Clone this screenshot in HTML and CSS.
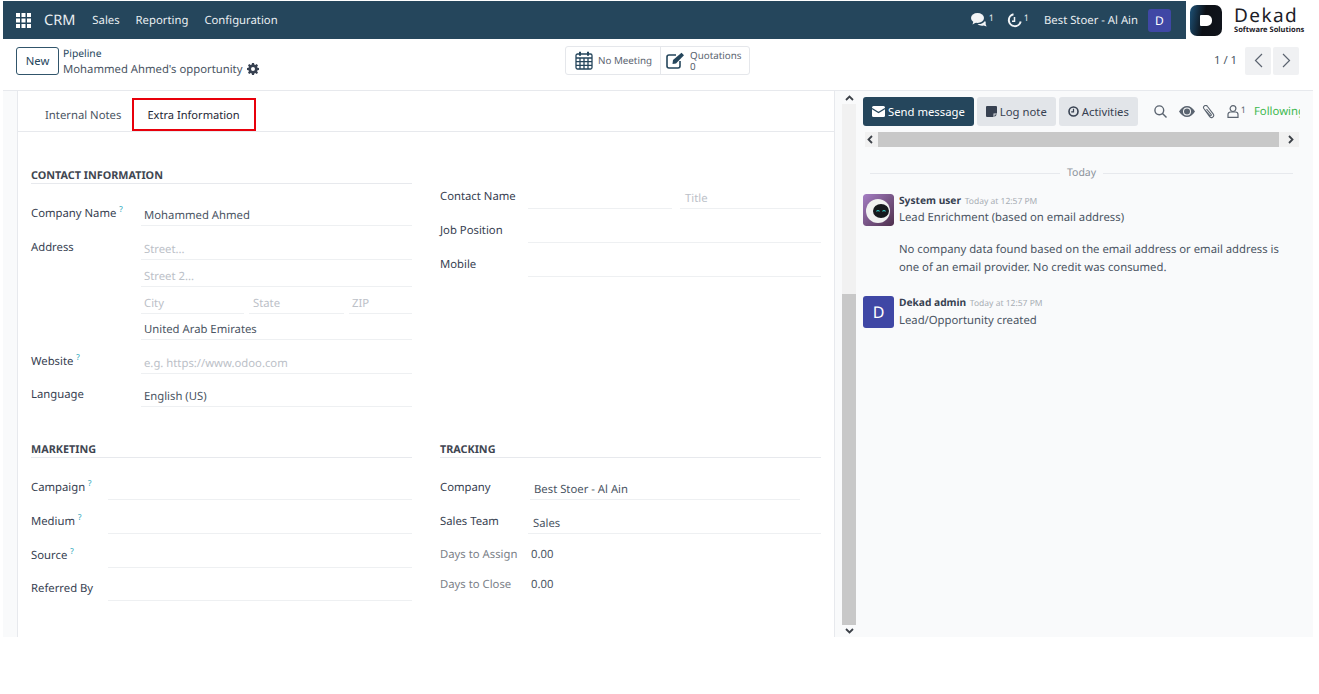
FILE: index.html
```html
<!DOCTYPE html>
<html lang="en">
<head>
	<meta charset="utf-8">
	<title>Mohammed Ahmed's opportunity</title>
	<link rel="stylesheet" href="styles.css">
</head>
<body>
<div class="app">
	<header class="topbar">
		<nav class="navbar">
			<svg class="apps-icon" width="15" height="15" viewBox="0 0 15 15" fill="#fff">
				<rect x="0" y="0" width="4" height="4"/><rect x="5.500" y="0" width="4" height="4"/><rect x="11" y="0" width="4" height="4"/>
				<rect x="0" y="5.500" width="4" height="4"/><rect x="5.500" y="5.500" width="4" height="4"/><rect x="11" y="5.500" width="4" height="4"/>
				<rect x="0" y="11" width="4" height="4"/><rect x="5.500" y="11" width="4" height="4"/><rect x="11" y="11" width="4" height="4"/>
			</svg>
			<span class="brand">CRM</span>
			<a class="nav-link">Sales</a>
			<a class="nav-link">Reporting</a>
			<a class="nav-link">Configuration</a>
			<span class="nav-space"></span>
			<span class="systray">
				<svg width="16" height="14" viewBox="0 0 16 14" fill="#f3f5f7">
					<ellipse cx="6.500" cy="5" rx="6.500" ry="5"/>
					<path d="M2.500 8 1.500 11.500l4-2.200z"/>
					<path d="M6.500 11c3 .4 6-.6 7.500-3 .8 1 1 2 .6 3l1 2.500-3-1c-2.200.6-4.500 0-6.100-1.500z"/>
				</svg>
				<sup>1</sup>
			</span>
			<span class="systray clock">
				<svg width="15" height="15" viewBox="0 0 15 15" fill="none" stroke="#f3f5f7" stroke-width="2">
					<path d="M6.500 1.300a6 6 0 1 0 7.200 7.200"/>
					<path d="M7.500 4v4.200H5" stroke-width="1.500"/>
				</svg>
				<sup>1</sup>
			</span>
			<span class="company-name">Best Stoer - Al Ain</span>
			<span class="user-badge">D</span>
		</nav>
		<div class="logo">
			<span class="logo-mark"><span class="logo-glyph"></span></span>
			<span class="logo-text">
				<span class="logo-name">Dekad</span>
				<span class="logo-sub">Software Solutions</span>
			</span>
		</div>
	</header>

	<div class="control-panel">
		<div class="cp-left">
			<button class="btn-new">New</button>
			<div class="crumbs">
				<a>Pipeline</a>
				<div class="crumb-title">Mohammed Ahmed's opportunity
					<svg width="12" height="12" viewBox="0 0 12 12" fill="#374151">
						<path fill-rule="evenodd" d="M5 0h2l.3 1.600 1 .4L9.700 1.100l1.300 1.300-.9 1.400.4 1L12 5v2l-1.500.3-.4 1 .9 1.400-1.300 1.300-1.400-.9-1 .4L7 12H5l-.3-1.500-1-.4-1.400.9-1.300-1.300.9-1.400-.4-1L0 7V5l1.500-.3.4-1-.9-1.400 1.300-1.300 1.400.9 1-.4zM6 4a2 2 0 1 0 0 4 2 2 0 0 0 0-4z"/>
					</svg>
				</div>
			</div>
		</div>
		<div class="stat-buttons">
			<div class="stat meeting">
				<svg width="18" height="19" viewBox="0 0 18 19" fill="none" stroke="#25465c" stroke-width="1.300">
					<rect x="1" y="3" width="16" height="15" rx="1.500"/>
					<path d="M1 7h16M1 10.700h16M1 14.400h16M5 7v11M9 7v11M13 7v11"/>
					<path d="M5 .8v4M13 .8v4" stroke-width="2"/>
				</svg>
				<span>No Meeting</span>
			</div>
			<div class="stat quotations">
				<svg width="19" height="17" viewBox="0 0 19 17" fill="none" stroke="#25465c" stroke-width="1.600">
					<path d="M10 3H3a2 2 0 0 0-2 2v9a2 2 0 0 0 2 2h9a2 2 0 0 0 2-2V9"/>
					<path d="M7 8 15.500 .8 18 3.300 10 11.500l-3.500.5z" fill="#25465c" stroke="none"/>
				</svg>
				<span class="stat-text"><span>Quotations</span><span>0</span></span>
			</div>
		</div>
		<div class="cp-right">
			<span class="pager-count">1 / 1</span>
			<span class="pager-btns">
				<button class="pager-btn"><svg width="9" height="15" viewBox="0 0 9 15" fill="none" stroke="#5b6470" stroke-width="1.200"><path d="M8 1 1.500 7.500 8 14"/></svg></button>
				<button class="pager-btn"><svg width="9" height="15" viewBox="0 0 9 15" fill="none" stroke="#5b6470" stroke-width="1.200"><path d="M1 1l6.500 6.500L1 14"/></svg></button>
			</span>
		</div>
	</div>

	<main class="content">
		<section class="sheet">
			<ul class="tabs">
				<li class="tab">Internal Notes</li>
				<li class="tab tab-marked">Extra Information</li>
			</ul>
			<div class="form-grid">
				<div class="group">
					<h3 class="group-title">CONTACT INFORMATION</h3>
					<div class="rows labels-112">
						<div class="row"><label>Company Name <sup class="help">?</sup></label><div class="field">Mohammed Ahmed</div></div>
						<div class="row"><label>Address</label><div class="field empty">Street...</div></div>
						<div class="row row-27"><label></label><div class="field empty">Street 2...</div></div>
						<div class="row row-27"><label></label>
							<div class="field-line">
								<div class="field empty city">City</div>
								<div class="field empty state">State</div>
								<div class="field empty zip">ZIP</div>
							</div>
						</div>
						<div class="row row-26"><label></label><div class="field">United Arab Emirates</div></div>
						<div class="row"><label>Website <sup class="help">?</sup></label><div class="field empty">e.g. https://www.odoo.com</div></div>
						<div class="row row-33"><label>Language</label><div class="field">English (US)</div></div>
					</div>
				</div>
				<div class="group group-contact">
					<div class="rows labels-88">
						<div class="row"><label>Contact Name</label>
							<div class="field-line">
								<div class="field contact-name"></div>
								<div class="field empty contact-title">Title</div>
							</div>
						</div>
						<div class="row"><label>Job Position</label><div class="field"></div></div>
						<div class="row"><label>Mobile</label><div class="field"></div></div>
					</div>
				</div>
				<div class="group">
					<h3 class="group-title">MARKETING</h3>
					<div class="rows labels-77">
						<div class="row"><label>Campaign <sup class="help">?</sup></label><div class="field"></div></div>
						<div class="row"><label>Medium <sup class="help">?</sup></label><div class="field"></div></div>
						<div class="row"><label>Source <sup class="help">?</sup></label><div class="field"></div></div>
						<div class="row row-33"><label>Referred By</label><div class="field"></div></div>
					</div>
				</div>
				<div class="group">
					<h3 class="group-title">TRACKING</h3>
					<div class="rows labels-88">
						<div class="row"><label>Company</label><div class="field short">Best Stoer - Al Ain</div></div>
						<div class="row"><label>Sales Team</label><div class="field">Sales</div></div>
						<div class="row row-plain"><label class="muted">Days to Assign</label><div class="value">0.00</div></div>
						<div class="row row-plain row-30"><label class="muted">Days to Close</label><div class="value">0.00</div></div>
					</div>
				</div>
			</div>
		</section>

		<div class="form-scroll">
			<svg class="scroll-arrow" width="9" height="6" viewBox="0 0 9 6" fill="none" stroke="#3c4148" stroke-width="1.800"><path d="M1 5l3.500-3.500L8 5"/></svg>
			<div class="scroll-track"><div class="scroll-thumb"></div></div>
			<svg class="scroll-arrow" width="9" height="6" viewBox="0 0 9 6" fill="none" stroke="#3c4148" stroke-width="1.800"><path d="M1 1l3.500 3.500L8 1"/></svg>
		</div>

		<aside class="chatter">
			<div class="chatter-top">
				<button class="chat-btn primary">
					<svg width="13" height="11" viewBox="0 0 13 11" fill="#fff"><rect width="13" height="11" rx="1.500"/><path d="M0 2.500l6.500 4 6.500-4" fill="none" stroke="#25465c" stroke-width="1.200"/></svg>
					Send message
				</button>
				<button class="chat-btn">
					<svg width="11" height="11" viewBox="0 0 11 11" fill="#374151"><path d="M0 1a1 1 0 0 1 1-1h9a1 1 0 0 1 1 1v6.500H7.500V11H1a1 1 0 0 1-1-1z"/><path d="M8.500 8.500H11L8.500 11z"/></svg>
					Log note
				</button>
				<button class="chat-btn">
					<svg width="11" height="11" viewBox="0 0 11 11" fill="none" stroke="#374151"><circle cx="5.500" cy="5.500" r="4.500" stroke-width="1.600"/><path d="M5.500 2.800v3H3.200" stroke-width="1.200"/></svg>
					Activities
				</button>
				<span class="chat-tools">
					<svg class="tool-search" width="13" height="13" viewBox="0 0 13 13" fill="none" stroke="#5b6470" stroke-width="1.400"><circle cx="5.300" cy="5.300" r="4.400"/><path d="M8.500 8.500 12.500 12.500"/></svg>
					<svg class="tool-eye" width="16" height="11" viewBox="0 0 16 11" fill="#5b6470"><path fill-rule="evenodd" d="M0 5.500C2 2 5 0 8 0s6 2 8 5.500C14 9 11 11 8 11S2 9 0 5.500zM8 1.500a4 4 0 1 0 0 8 4 4 0 0 0 0-8z"/><circle cx="8" cy="5.500" r="3"/></svg>
					<svg class="tool-clip" width="13" height="14" viewBox="0 0 13 14" fill="none" stroke="#5b6470" stroke-width="1.100"><path d="M2.500 4.500 7.500 11.500a2.200 2.200 0 0 0 3.800-2.400L5.500 1.500A2 2 0 0 0 1.800 3.500L7.700 10.400a.8.800 0 0 0 1.400-1L4.500 4"/></svg>
					<span class="tool-followers">
						<svg width="12" height="13" viewBox="0 0 12 13" fill="none" stroke="#5b6470" stroke-width="1.200"><circle cx="6" cy="3.600" r="2.900"/><path d="M1 12.300V9.500a2.500 2.500 0 0 1 2.500-2.500h5A2.500 2.500 0 0 1 11 9.500v2.800z"/></svg>
						<sup>1</sup>
					</span>
					<span class="following">Following</span>
				</span>
			</div>
			<div class="h-scroll">
				<svg width="6" height="9" viewBox="0 0 6 9" fill="none" stroke="#3c4148" stroke-width="1.800"><path d="M5 1 1.500 4.500 5 8"/></svg>
				<div class="h-thumb"></div>
				<svg width="6" height="9" viewBox="0 0 6 9" fill="none" stroke="#3c4148" stroke-width="1.800"><path d="M1 1l3.500 3.500L1 8"/></svg>
			</div>
			<div class="day-sep"><span>Today</span></div>
			<article class="message">
				<svg class="avatar" width="31" height="32" viewBox="0 0 31 32">
					<defs>
						<linearGradient id="botbg" x1="0" y1="0" x2="1" y2="1"><stop offset="0" stop-color="#a57ec4"/><stop offset="1" stop-color="#4e2f4c"/></linearGradient>
					</defs>
					<rect width="31" height="32" rx="3" fill="url(#botbg)"/>
					<circle cx="15" cy="17" r="12" fill="#f1f1f1"/>
					<ellipse cx="18" cy="17" rx="8" ry="7" fill="#16181d"/>
					<path d="M13.500 17.500q1.500-2 3 0M19.500 17.500q1.500-2 3 0" fill="none" stroke="#35c6c0" stroke-width="1.200"/>
				</svg>
				<div class="msg-body">
					<div class="msg-head"><b>System user</b> <time>Today at 12:57 PM</time></div>
					<p class="msg-line">Lead Enrichment (based on email address)</p>
					<p class="msg-para">No company data found based on the email address or email address is one of an email provider. No credit was consumed.</p>
				</div>
			</article>
			<article class="message message-admin">
				<div class="avatar avatar-letter">D</div>
				<div class="msg-body">
					<div class="msg-head"><b>Dekad admin</b> <time>Today at 12:57 PM</time></div>
					<p class="msg-line msg-line-low">Lead/Opportunity created</p>
				</div>
			</article>
		</aside>
	</main>
</div>
</body>
</html>
```

FILE: styles.css
```css
* {
	box-sizing: border-box;
}
html, body {
	margin: 0;
	background: #fff;
}
body {
	font-family: "Noto Sans", "Open Sans", sans-serif;
	font-size: 11.300px;
	color: #4b5563;
	text-rendering: geometricPrecision;
}
.app {
	width: 1310px;
	height: 637px;
	margin-left: 3px;
	padding-top: 1px;
	display: flex;
	flex-direction: column;
	overflow: hidden;
}

/* top bar */
.topbar {
	display: flex;
	height: 38px;
	flex: none;
}
.navbar {
	flex: 1;
	display: flex;
	align-items: center;
	background: #25465c;
	color: #e9eef1;
	padding-left: 13px;
}
.apps-icon {
	margin-right: 13px;
}
.brand {
	font-size: 14.500px;
	margin-right: 17px;
}
.nav-link {
	margin-right: 16px;
}
.nav-space {
	flex: 1;
}
.systray {
	display: flex;
	align-items: center;
	margin-right: 13px;
}
.systray sup, .tool-followers sup {
	font-size: 9px;
	line-height: 1;
	align-self: flex-start;
	margin-left: 2px;
}
.systray.clock {
	margin-right: 15px;
}
.company-name {
	margin-right: 10px;
}
.user-badge {
	width: 23px;
	height: 23px;
	border-radius: 3px;
	background: #3f47a5;
	color: #fff;
	display: flex;
	align-items: center;
	justify-content: center;
	margin-right: 15px;
	font-size: 12px;
}
.logo {
	width: 127px;
	display: flex;
	align-items: center;
	padding-left: 4px;
	background: #fff;
}
.logo-mark {
	width: 32px;
	height: 31px;
	flex: none;
	border-radius: 7px;
	background: linear-gradient(100deg, #1d5278, #0d1016 45%, #10141c);
	display: flex;
	align-items: center;
	justify-content: center;
	margin-right: 12px;
}
.logo-glyph {
	width: 12px;
	height: 11px;
	background: #fff;
	border-radius: 1px 5px 5px 1px;
}
.logo-text {
	display: flex;
	flex-direction: column;
	color: #1c2027;
}
.logo-name {
	font-size: 19px;
	line-height: 20px;
	letter-spacing: 1.400px;
}
.logo-sub {
	font-size: 7.500px;
	font-weight: 700;
	line-height: 10px;
	white-space: nowrap;
}

/* control panel */
.control-panel {
	height: 52px;
	flex: none;
	display: grid;
	grid-template-columns: 1fr auto 1fr;
	align-items: center;
	background: #fff;
	border-bottom: 1px solid #e7e9ed;
	padding: 0 14px 8px 13px;
}
.cp-left {
	display: flex;
	align-items: center;
}
.btn-new {
	width: 43px;
	height: 28px;
	padding: 0;
	border: 1px solid #31556b;
	border-radius: 3px;
	background: #fff;
	color: #25465c;
	font: 11.300px "Noto Sans", sans-serif;
	margin-right: 4px;
}
.crumbs {
	padding-top: 2px;
	line-height: 15px;
	font-size: 10.300px;
	color: #25465c;
}
.crumb-title {
	font-size: 11.300px;
	color: #4b5563;
	display: flex;
	align-items: center;
	gap: 5px;
}
.stat-buttons {
	display: flex;
	height: 29px;
	border: 1px solid #e5e7eb;
	border-radius: 3px;
}
.stat {
	display: flex;
	align-items: center;
	font-size: 9.800px;
	color: #5b6470;
}
.meeting {
	width: 95px;
	padding-left: 9px;
	gap: 5px;
	border-right: 1px solid #e5e7eb;
}
.quotations {
	width: 88px;
	padding-left: 5px;
	gap: 5px;
}
.stat-text {
	display: flex;
	flex-direction: column;
	line-height: 11px;
}
.cp-right {
	display: flex;
	justify-content: flex-end;
	align-items: center;
}
.pager-count {
	margin-right: 8px;
}
.pager-btns {
	display: flex;
	gap: 2px;
}
.pager-btn {
	width: 26px;
	height: 28px;
	padding: 0;
	border: 0;
	border-radius: 2px;
	background: #f0f1f3;
	display: flex;
	align-items: center;
	justify-content: center;
}

/* form */
.content {
	flex: 1;
	display: flex;
	min-height: 0;
	background: #f9fafb;
}
.sheet {
	width: 818px;
	margin-left: 14px;
	background: #fff;
	border-left: 1px solid #e7e9ed;
	border-right: 1px solid #e7e9ed;
	flex: none;
}
.tabs {
	list-style: none;
	margin: 0;
	height: 41px;
	padding: 7px 0 0 12px;
	display: flex;
	border-bottom: 1px solid #e7e9ed;
}
.tab {
	height: 33px;
	padding: 0 11px 0 15px;
	line-height: 35px;
	color: #4b5563;
	white-space: nowrap;
}
.tab-marked {
	width: 124px;
	border: 2px solid #e8000b;
	line-height: 31px;
	padding: 0 13px;
	font-size: 11.100px;
	color: #1f2937;
	background: #fff;
}
.form-grid {
	display: grid;
	grid-template-columns: 381px 381px;
	column-gap: 28px;
	row-gap: 35px;
	padding: 36px 0 0 13px;
}
.group-title {
	margin: 0;
	height: 16px;
	font-size: 10.800px;
	line-height: 16px;
	font-weight: 700;
	color: #3f4651;
	border-bottom: 1px solid #e7e9ed;
}
.group-contact {
	padding-top: 7px;
}
.rows {
	display: flex;
	flex-direction: column;
}
.group-title + .rows {
	margin-top: 8px;
}
.row {
	height: 34px;
	display: flex;
	align-items: flex-end;
}
.row-33 { height: 33px; }
.row-27 { height: 27px; }
.row-26 { height: 26px; }
.row label {
	flex: none;
	height: 22px;
	line-height: 20px;
	color: #374151;
	white-space: nowrap;
}
.labels-112 label { width: 110px; }
.labels-88 label { width: 88px; }
.labels-77 label { width: 77px; }
.help {
	font-size: 8px;
	color: #17a2b8;
	line-height: 0;
}
.field {
	flex: 1;
	height: 22px;
	padding-left: 3px;
	line-height: 23px;
	border-bottom: 1px solid #eef0f2;
	white-space: nowrap;
}
.field.empty {
	color: #bcc1c8;
}
.field.short {
	flex: none;
	width: 270px;
	padding-left: 4px;
	margin-left: 2px;
}
.labels-88 .row .field:not(.short) {
	padding-left: 5px;
}
.field-line {
	flex: 1;
	display: flex;
	gap: 5px;
}
.city { flex: none; width: 103px; }
.state { flex: none; width: 95px; padding-left: 4px; }
.zip { flex: 1; padding-left: 3px; }
.contact-name { flex: none; width: 144px; }
.contact-title { flex: 1; margin-left: 3px; }
.row-plain {
	height: 33px;
}
.row-plain label {
	line-height: 20px;
}
.row-30 {
	height: 30px;
}
.row label.muted {
	color: #7b8188;
}
.value {
	height: 22px;
	line-height: 20px;
	margin-left: 3px;
}

/* form scrollbar */
.form-scroll {
	width: 22px;
	flex: none;
	padding: 4px 1px 3px 7px;
	display: flex;
	flex-direction: column;
	align-items: center;
	background: #f9fafb;
}
.scroll-arrow {
	flex: none;
}
.scroll-track {
	flex: 1;
	width: 100%;
	margin: 3px 0;
	padding-top: 190px;
	background: #f1f1f1;
}
.scroll-thumb {
	height: 100%;
	background: #c8c8c8;
}

/* chatter */
.chatter {
	flex: 1;
	min-width: 0;
	padding: 6px 13px 0 6px;
	overflow: hidden;
}
.chatter-top {
	display: flex;
	align-items: center;
	height: 29px;
	gap: 3px;
}
.chat-btn {
	height: 29px;
	padding: 0 9px;
	border: 0;
	border-radius: 3px;
	background: #e2e5e9;
	color: #374151;
	font: 11.300px "Noto Sans", sans-serif;
	display: flex;
	align-items: center;
	gap: 3px;
	white-space: nowrap;
	flex: none;
}
.chat-btn.primary {
	background: #25465c;
	color: #fff;
}
.chat-tools {
	flex: 1;
	min-width: 0;
	display: flex;
	align-items: center;
	overflow: hidden;
	padding-left: 13px;
	color: #5b6470;
}
.chat-tools svg {
	flex: none;
}
.tool-search { margin-right: 12px; }
.tool-eye { margin-right: 7px; }
.tool-clip { margin-right: 12px; }
.tool-followers {
	flex: none;
	display: flex;
	align-items: center;
	margin-right: 8px;
}
.following {
	color: #3fb950;
	white-space: nowrap;
}
.h-scroll {
	height: 15px;
	margin: 6px 0 0 2px;
	padding: 0 5px 0 2px;
	width: 434px;
	display: flex;
	align-items: center;
	background: #f1f1f1;
	gap: 5px;
}
.h-thumb {
	width: 402px;
	height: 15px;
	margin-right: 4px;
	background: #c8c8c8;
}
.day-sep {
	display: flex;
	align-items: center;
	gap: 7px;
	margin: 17px 7px 0 7px;
	font-size: 10.500px;
	color: #8d939b;
	line-height: 18px;
}
.day-sep::before, .day-sep::after {
	content: "";
	flex: 1;
	height: 1px;
	background: #e7e9ed;
}
.message {
	display: flex;
	margin-top: 11px;
}
.message-admin {
	margin-top: 18px;
}
.avatar {
	flex: none;
	width: 31px;
	height: 32px;
	margin-top: 1px;
	border-radius: 3px;
}
.avatar-letter {
	background: #3f47a5;
	color: #fff;
	font-size: 16px;
	display: flex;
	align-items: center;
	justify-content: center;
}
.msg-body {
	margin-left: 5px;
	flex: 1;
}
.msg-head {
	font-size: 10.200px;
	line-height: 14px;
	color: #374151;
}
.msg-head time {
	font-size: 8.500px;
	color: #a7adb4;
	margin-left: 1px;
}
.msg-line {
	margin: 0;
	line-height: 18px;
}
.msg-line-low {
	margin-top: 1px;
}
.msg-para {
	margin: 14px 0 0;
	line-height: 18px;
}
```
